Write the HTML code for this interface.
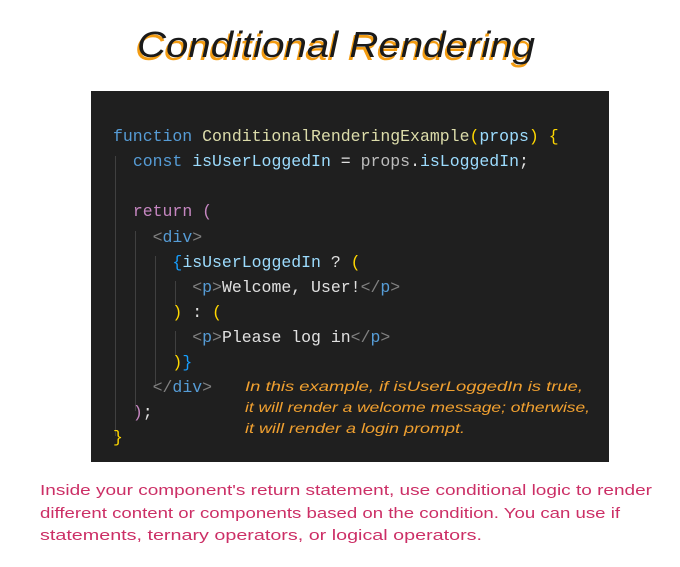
<!DOCTYPE html>
<html><head><meta charset="utf-8"><style>
html,body{margin:0;padding:0;background:#fff;width:680px;height:567px;overflow:hidden;position:relative}
.code{position:absolute;left:91px;top:91px;width:518px;height:371px;background:#1f1f1f;}
.ln{position:absolute;left:22px;font-family:"Liberation Mono",monospace;font-size:16.5px;white-space:pre;color:#e0e0e0;line-height:20px}
.g{position:absolute;width:1px;background:#404040}
.k{color:#569cd6}.f{color:#dcdcaa}.p{color:#9cdcfe}.y{color:#ffd700}.m{color:#c586c0}.b{color:#179fff}.t{color:#569cd6}.a{color:#808080}.v{color:#bcbcbc}
</style></head><body>
<svg width="680" height="567" style="position:absolute;left:0;top:0">
<g font-family="Liberation Sans, sans-serif" font-size="36" font-style="italic">
<text x="135" y="60" fill="#f39c12" textLength="398" lengthAdjust="spacingAndGlyphs">Conditional Rendering</text>
<text x="137" y="57" fill="#1a1a1a" textLength="398" lengthAdjust="spacingAndGlyphs">Conditional Rendering</text>
</g>
<g font-family="Liberation Sans, sans-serif" font-size="15" fill="#cc2f66">
<text x="40" y="495" textLength="612" lengthAdjust="spacingAndGlyphs">Inside your component's return statement, use conditional logic to render</text>
<text x="40" y="518" textLength="580" lengthAdjust="spacingAndGlyphs">different content or components based on the condition. You can use if</text>
<text x="40" y="540" textLength="442" lengthAdjust="spacingAndGlyphs">statements, ternary operators, or logical operators.</text>
</g>
</svg>
<div class="code">
<div class="g" style="left:24px;top:65px;height:280px"></div>
<div class="g" style="left:44px;top:140px;height:180px"></div>
<div class="g" style="left:64px;top:165px;height:130px"></div>
<div class="g" style="left:84px;top:190px;height:25px"></div>
<div class="g" style="left:84px;top:240px;height:25px"></div>
<div class="ln" style="top:36px"><span class="k">function</span> <span class="f">ConditionalRenderingExample</span><span class="y">(</span><span class="p">props</span><span class="y">)</span> <span class="y">{</span></div>
<div class="ln" style="top:61px">  <span class="k">const</span> <span class="p">isUserLoggedIn</span> = <span class="v">props</span>.<span class="p">isLoggedIn</span>;</div>
<div class="ln" style="top:111px">  <span class="m">return</span> <span class="m">(</span></div>
<div class="ln" style="top:137px">    <span class="a">&lt;</span><span class="t">div</span><span class="a">&gt;</span></div>
<div class="ln" style="top:162px">      <span class="b">{</span><span class="p">isUserLoggedIn</span> ? <span class="y">(</span></div>
<div class="ln" style="top:187px">        <span class="a">&lt;</span><span class="t">p</span><span class="a">&gt;</span>Welcome, User!<span class="a">&lt;/</span><span class="t">p</span><span class="a">&gt;</span></div>
<div class="ln" style="top:212px">      <span class="y">)</span> : <span class="y">(</span></div>
<div class="ln" style="top:237px">        <span class="a">&lt;</span><span class="t">p</span><span class="a">&gt;</span>Please log in<span class="a">&lt;/</span><span class="t">p</span><span class="a">&gt;</span></div>
<div class="ln" style="top:262px">      <span class="y">)</span><span class="b">}</span></div>
<div class="ln" style="top:287px">    <span class="a">&lt;/</span><span class="t">div</span><span class="a">&gt;</span></div>
<div class="ln" style="top:312px">  <span class="m">)</span>;</div>
<div class="ln" style="top:337px"><span class="y">}</span></div>
</div>
<svg width="680" height="567" style="position:absolute;left:0;top:0">
<g font-family="Liberation Sans, sans-serif" font-size="14" fill="#f0a030" font-style="italic">
<text x="245" y="391" textLength="338" lengthAdjust="spacingAndGlyphs">In this example, if isUserLoggedIn is true,</text>
<text x="245" y="412" textLength="345" lengthAdjust="spacingAndGlyphs">it will render a welcome message; otherwise,</text>
<text x="245" y="433" textLength="220" lengthAdjust="spacingAndGlyphs">it will render a login prompt.</text>
</g>
</svg>
</body></html>
